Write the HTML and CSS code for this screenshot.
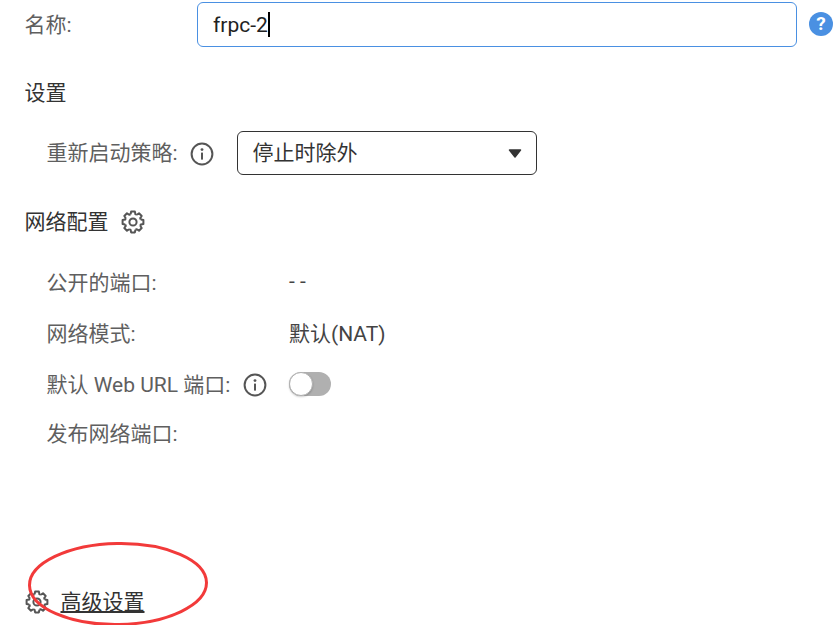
FILE: index.html
```html
<!DOCTYPE html>
<html lang="en">
<head>
    <meta charset="UTF-8">
    <title>frpc-2</title>
    <link rel="stylesheet" href="styles.css">
</head>
<body>
    <svg class="defs" width="0" height="0">
        <defs>
            <polyline id="tooth" points="-2.4,-7.8 -1.9,-10.4 1.9,-10.4 2.4,-7.8 3.8,-7.2"/>
            <g id="gear" fill="none" stroke="#555" stroke-width="2" stroke-linejoin="round" transform="translate(12 12)">
                <use href="#tooth"/>
                <use href="#tooth" transform="rotate(45)"/>
                <use href="#tooth" transform="rotate(90)"/>
                <use href="#tooth" transform="rotate(135)"/>
                <use href="#tooth" transform="rotate(180)"/>
                <use href="#tooth" transform="rotate(225)"/>
                <use href="#tooth" transform="rotate(270)"/>
                <use href="#tooth" transform="rotate(315)"/>
                <circle r="3.6"/>
            </g>
            <g id="info">
                <circle cx="12" cy="12" r="10.4" fill="none" stroke="#555" stroke-width="2"/>
                <circle cx="12" cy="7.6" r="1.4" fill="#555"/>
                <rect x="11" y="10.6" width="2" height="7" fill="#555"/>
            </g>
        </defs>
    </svg>

    <main class="form">
        <div class="name-row">
            <label class="label name-label">名称:</label>
            <div class="name-input">frpc-2<span class="caret"></span></div>
            <span class="help">?</span>
        </div>

        <h3 class="section"><span class="nudge">设置</span></h3>
        <div class="restart-row">
            <span class="label">重新启动策略:</span>
            <svg class="icon info-icon" viewBox="0 0 24 24"><use href="#info"/></svg>
            <div class="select">
                <span class="nudge">停止时除外</span>
                <svg class="arrow" width="14" height="9" viewBox="0 0 14 9"><path d="M1.5 1h11L7 8z" fill="#333" stroke="#333" stroke-width="1.5" stroke-linejoin="round"/></svg>
            </div>
        </div>

        <h3 class="section network"><span class="nudge">网络配置</span><svg class="icon gear-icon" viewBox="0 0 24 24"><use href="#gear"/></svg></h3>
        <div class="rows">
            <div class="row"><span class="label row-label">公开的端口:</span><span class="value">- -</span></div>
            <div class="row"><span class="label row-label">网络模式:</span><span class="value">默认(NAT)</span></div>
            <div class="row">
                <div class="row-label">
                    <span class="label">默认 Web URL 端口:</span>
                    <svg class="icon" viewBox="0 0 24 24"><use href="#info"/></svg>
                </div>
                <span class="toggle"><span class="knob"></span></span>
            </div>
            <div class="row last"><span class="label row-label">发布网络端口:</span></div>
        </div>

        <div class="advanced">
            <svg class="icon" viewBox="0 0 24 24"><use href="#gear"/></svg>
            <a class="nudge advanced-link">高级设置</a>
        </div>
    </main>

    <svg class="circle" width="184" height="88" viewBox="0 0 184 88">
        <ellipse cx="92" cy="43" rx="88.5" ry="40.5" transform="rotate(-1 92 43)" fill="none" stroke="#f23a3a" stroke-width="3"/>
    </svg>
</body>
</html>
```
FILE: styles.css
```css
* {
    box-sizing: border-box;
    margin: 0;
    padding: 0;
}

html, body {
    height: 625px;
    overflow: hidden;
}

body {
    position: relative;
    background-color: #fff;
    color: #333;
    font-family: Roboto, "Noto Sans CJK SC", sans-serif;
    font-size: 21px;
}

.defs {
    position: absolute;
}

.form {
    padding: 2px 0 0 25px;
    width: 833px;
}

/* the CJK fallback font sits a bit low and right in its line box */
.nudge,
.label {
    transform: translate(-0.5px, -2px);
}

.label {
    color: #5f5f5f;
}

.name-row {
    display: flex;
    align-items: center;
    height: 45px;
}

.name-label {
    width: 172px;
}

.name-input {
    display: flex;
    align-items: center;
    width: 600px;
    height: 45px;
    padding-left: 15px;
    border: 1px solid #4a90e2;
    border-radius: 6px;
    color: #222;
}

.caret {
    width: 2px;
    height: 25px;
    background-color: #000;
}

.help {
    display: flex;
    align-items: center;
    justify-content: center;
    flex-shrink: 0;
    width: 24px;
    height: 24px;
    margin-left: 12px;
    margin-bottom: 2px;
    border-radius: 50%;
    background-color: #4a90e2;
    color: #fff;
    font-size: 19px;
    font-weight: bold;
}

.section {
    display: flex;
    align-items: center;
    height: 30px;
    margin-top: 31px;
    font-size: 21px;
    font-weight: normal;
}

.section.network {
    margin-top: 32px;
}

.icon {
    width: 24px;
    height: 24px;
    flex-shrink: 0;
}

.restart-row {
    display: flex;
    align-items: center;
    height: 44px;
    margin-top: 23px;
    padding-left: 22px;
}

.info-icon {
    margin-left: 12px;
    margin-top: 2px;
}

.select {
    display: flex;
    align-items: center;
    justify-content: space-between;
    width: 300px;
    height: 44px;
    margin-left: 23px;
    padding: 0 14px 0 15px;
    border: 1px solid #333;
    border-radius: 6px;
}

.gear-icon {
    margin-left: 12px;
}

.rows {
    display: flex;
    flex-direction: column;
    gap: 1px;
    margin-top: 21px;
    padding-left: 22px;
}

.row {
    display: flex;
    align-items: center;
    height: 50px;
}

.row.last {
    margin-top: -2px;
}

.row-label {
    display: flex;
    align-items: center;
    gap: 12px;
    width: 242px;
}

.value {
    color: #444;
    transform: translateY(-2px);
}

.toggle {
    display: block;
    width: 42px;
    height: 24px;
    margin-bottom: 2px;
    border-radius: 12px;
    background-color: #b0b0b0;
}

.knob {
    display: block;
    width: 24px;
    height: 24px;
    border: 1px solid #b0b0b0;
    border-radius: 50%;
    background-color: #fff;
    box-shadow: 0 1px 2px rgba(0, 0, 0, 0.2);
}

.advanced {
    display: flex;
    align-items: center;
    gap: 12px;
    height: 30px;
    margin-top: 128px;
}

.advanced-link {
    color: #333;
    text-decoration: underline;
}

.circle {
    position: absolute;
    left: 26px;
    top: 541px;
}
```
